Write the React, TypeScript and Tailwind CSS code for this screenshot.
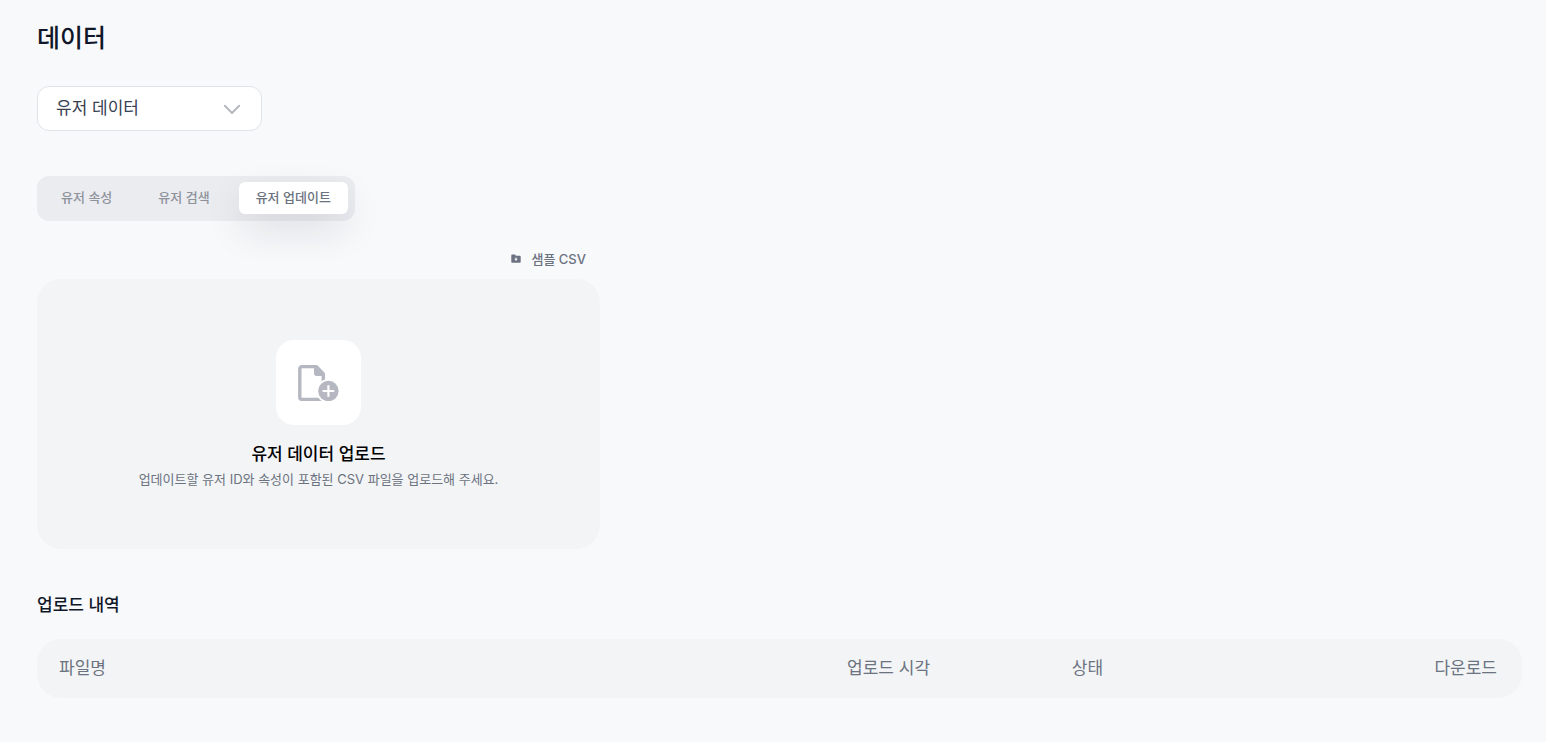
import { useState } from "react";

const tabs = ["유저 속성", "유저 검색", "유저 업데이트"];

const columns = [
  { title: "파일명", className: "w-[53%] rounded-l-3xl pl-[22px] text-left" },
  { title: "업로드 시각", className: "w-[15%] pl-[23px] text-left" },
  { title: "상태", className: "w-[16%] pl-[25px] text-left" },
  { title: "다운로드", className: "w-[16%] rounded-r-3xl pr-[25px] text-right" },
];

function ChevronIcon() {
  return (
    <svg
      viewBox="0 0 18 11"
      className="pointer-events-none absolute top-[18px] right-[21px] h-[11px] w-[18px]"
      fill="none"
      stroke="#b5b8c0"
      strokeWidth="2"
      strokeLinecap="round"
      strokeLinejoin="round"
      aria-hidden="true"
    >
      <path d="M1.8 1.8 9 9l7.2-7.2" />
    </svg>
  );
}

function FolderDownloadIcon() {
  return (
    <svg viewBox="0 0 10 10" className="size-[10px]" aria-hidden="true">
      <path
        fill="#6b7280"
        d="M1.3.6h2.6l1.1 1.1h3.7c.6 0 1 .4 1 1v5.1c0 .6-.4 1-1 1H1.3c-.6 0-1-.4-1-1V1.6c0-.6.4-1 1-1z"
      />
      <path d="M4.5 3.4h1v1.4h1.2L5 6.9 3.3 4.8h1.2z" fill="#f8f9fb" />
    </svg>
  );
}

function FileAddIcon() {
  return (
    <svg viewBox="0 0 41 37" className="h-[37px] w-[41px]" aria-hidden="true">
      <path
        d="M17 2.6H4c-1.2 0-2.2.9-2.2 2.1v28.6c0 1.2 1 2.1 2.2 2.1h21.3V11z"
        fill="none"
        stroke="#b5b8c0"
        strokeWidth="3.4"
      />
      <path
        fill="#b5b8c0"
        d="M16 .9h2.2c.6 0 1 .2 1.4.6l6.8 6.9c.4.4.6.9.6 1.5v2h-8.6c-1.3 0-2.4-1-2.4-2.4z"
      />
      <circle cx="30.4" cy="27" r="12" fill="#fff" />
      <circle cx="30.4" cy="27" r="10.2" fill="#b5b8c0" />
      <path
        d="M30.4 22v10M25.4 27h10"
        stroke="#fff"
        strokeWidth="2.2"
        strokeLinecap="round"
      />
    </svg>
  );
}

export default function App() {
  const [activeTab, setActiveTab] = useState("유저 업데이트");

  return (
    <main className="min-h-screen bg-[#f8f9fb] pt-5 pr-6 pb-11 pl-[37px] font-['Inter','Noto_Sans_CJK_KR',sans-serif]">
      <h1 className="text-[25px] leading-9 font-medium text-[#0f1729]">데이터</h1>

      <div className="relative mt-[30px] w-[225px]">
        <select
          aria-label="데이터 종류"
          className="h-[45px] w-full appearance-none rounded-xl border border-[#e1e3ea] bg-white pr-12 pl-[18px] text-[17px] text-[#374151]"
        >
          <option>유저 데이터</option>
        </select>
        <ChevronIcon />
      </div>

      <div className="mt-[45px] flex h-[45px] w-fit items-start gap-3 rounded-xl bg-[#ebecf0] px-[7px] pt-[6px]">
        {tabs.map((tab) => (
          <button
            key={tab}
            type="button"
            onClick={() => setActiveTab(tab)}
            className={
              tab === activeTab
                ? "h-8 rounded-md bg-white px-[17px] text-[13px] font-medium text-[#6b7280] shadow-[0_16px_40px_-4px_rgba(23,23,37,0.16)]"
                : "h-8 rounded-md px-[17px] text-[13px] font-medium text-[#8e929b]"
            }
          >
            {tab}
          </button>
        ))}
      </div>

      <section className="max-w-[563px]">
        <div className="mt-7 flex justify-end pr-[14px]">
          <a
            href="#sample"
            className="flex items-center gap-[10px] text-[13px] leading-5 font-medium text-[#6b7280]"
          >
            <FolderDownloadIcon />
            샘플 CSV
          </a>
        </div>

        <label className="mt-[10px] flex h-[270px] cursor-pointer flex-col items-center rounded-3xl bg-[#f3f4f6] pt-[61px]">
          <input type="file" accept=".csv" className="sr-only" />
          <span className="flex size-[85px] items-center justify-center rounded-[18px] bg-white">
            <FileAddIcon />
          </span>
          <span className="mt-[17px] text-[17px] leading-6 font-medium text-black">
            유저 데이터 업로드
          </span>
          <span className="mt-[3px] text-[13px] leading-5 text-[#6b7280]">
            업데이트할 유저 ID와 속성이 포함된 CSV 파일을 업로드해 주세요.
          </span>
        </label>
      </section>

      <section className="mt-11">
        <h2 className="text-[17px] leading-6 font-medium text-[#0f1729]">업로드 내역</h2>
        <table className="mt-[22px] w-full table-fixed">
          <thead>
            <tr>
              {columns.map((column) => (
                <th
                  key={column.title}
                  scope="col"
                  className={`h-[59px] bg-[#f3f4f6] text-[17px] font-normal text-[#6b7280] ${column.className}`}
                >
                  {column.title}
                </th>
              ))}
            </tr>
          </thead>
        </table>
      </section>
    </main>
  );
}
